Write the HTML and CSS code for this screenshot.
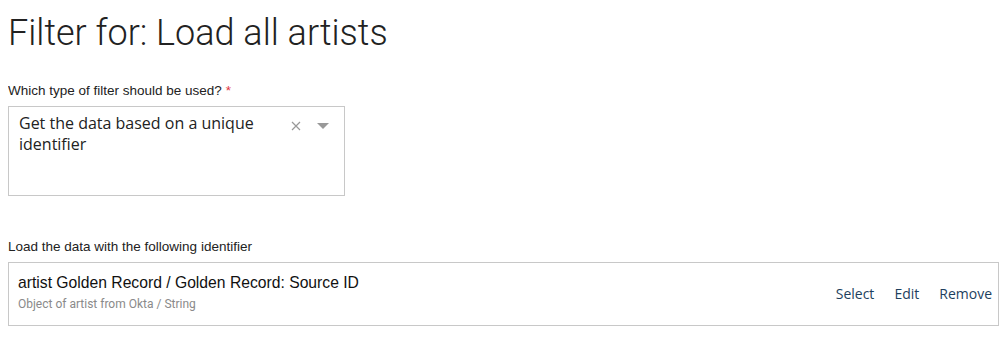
FILE: index.html
```html
<!DOCTYPE html>
<html lang="en">
<head>
    <meta charset="UTF-8">
    <title>Filter for: Load all artists</title>
    <link rel="stylesheet" href="styles.css">
</head>
<body>
    <h1 class="page-title">Filter for: Load all artists</h1>

    <div class="field">
        <label class="field-label">Which type of filter should be used? <span class="required">*</span></label>
        <div class="select-box">
            <div class="select-value">Get the data based on a unique identifier</div>
            <div class="select-icons">
                <svg class="icon-clear" width="10" height="10" viewBox="0 0 10 10">
                    <path d="M1 1 L9 9 M9 1 L1 9" stroke="#999" stroke-width="1.2" fill="none"/>
                </svg>
                <svg class="icon-arrow" width="12" height="7" viewBox="0 0 12 7">
                    <path d="M0 0 L12 0 L6 6 Z" fill="#999"/>
                </svg>
            </div>
        </div>
    </div>

    <div class="field field-identifier">
        <label class="field-label">Load the data with the following identifier</label>
        <div class="identifier-box">
            <div class="identifier-text">
                <div class="identifier-name">artist Golden Record / Golden Record: Source ID</div>
                <div class="identifier-type">Object of artist from Okta / String</div>
            </div>
            <div class="identifier-actions">
                <a class="action-link">Select</a>
                <a class="action-link">Edit</a>
                <a class="action-link">Remove</a>
            </div>
        </div>
    </div>
</body>
</html>
```

FILE: styles.css
```css
body {
    margin: 8px;
    background-color: #fff;
    color: #222;
    font-family: "Liberation Sans", Arial, sans-serif;
}
.page-title {
    font-family: Roboto, sans-serif;
    font-weight: 300;
    font-size: 36px;
    line-height: 42px;
    margin: 4px 0 29px 0;
    color: #222;
}
.field-label {
    display: block;
    font-size: 13.5px;
    line-height: 15px;
    color: #222;
    margin-bottom: 8px;
}
.required {
    color: #e0323c;
}
.select-box {
    width: 335px;
    height: 88px;
    border: 1px solid #c8c8c8;
    display: flex;
    align-items: flex-start;
}
.select-value {
    font-family: "Open Sans", sans-serif;
    font-size: 16px;
    line-height: 21px;
    color: #222;
    width: 250px;
    padding: 6px 0 0 10px;
}
.select-icons {
    display: flex;
    align-items: center;
    gap: 16px;
    padding: 14px 0 0 22px;
}
.field-identifier {
    margin-top: 43px;
}
.identifier-box {
    border: 1px solid #c8c8c8;
    height: 62px;
    display: flex;
    align-items: center;
    justify-content: space-between;
}
.identifier-text {
    padding: 0 0 4px 9px;
}
.identifier-name {
    font-size: 15.7px;
    line-height: 19px;
    color: #111;
    margin-bottom: 5px;
}
.identifier-type {
    font-family: Roboto, sans-serif;
    font-size: 12px;
    line-height: 14px;
    color: #8a8a8a;
}
.identifier-actions {
    display: flex;
    padding-right: 6px;
    padding-bottom: 2px;
}
.action-link {
    font-family: "Open Sans", sans-serif;
    font-size: 14px;
    color: #1d3f5e;
    cursor: pointer;
}
.action-link + .action-link {
    margin-left: 20px;
}
```
